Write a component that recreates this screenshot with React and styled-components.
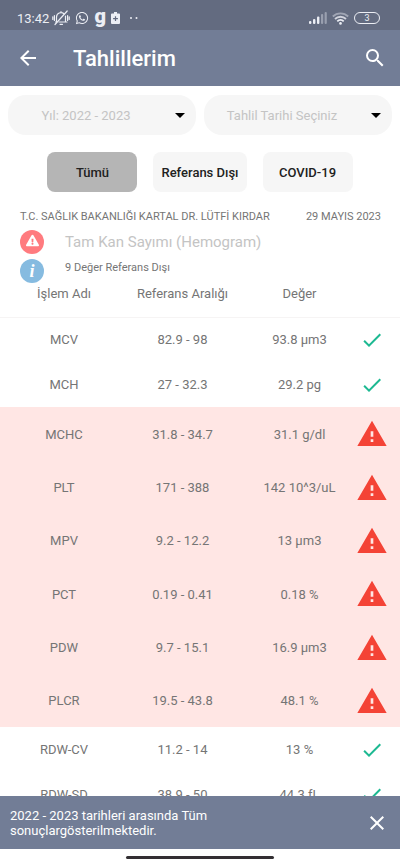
import React, { useState } from 'react'
import styled, { createGlobalStyle } from 'styled-components'
import { FaExclamationTriangle, FaWhatsapp } from 'react-icons/fa'
import {
  MdArrowBack,
  MdArrowDropDown,
  MdCheck,
  MdClose,
  MdSearch,
  MdWarning,
} from 'react-icons/md'

const GlobalStyle = createGlobalStyle`
  * {
    box-sizing: border-box;
  }

  body {
    margin: 0;
    background: #fff;
    color: #757575;
    font-family: Roboto, 'Noto Sans', sans-serif;
    font-size: 13px;
  }

  button,
  select {
    font-family: inherit;
  }

  svg {
    display: block;
    flex: none;
  }
`

const Screen = styled.div`
  display: flex;
  flex-direction: column;
  height: 100vh;
  overflow: hidden;
`

const StatusBar = styled.div`
  display: flex;
  flex: none;
  align-items: center;
  height: 30px;
  padding: 6px 20px 0 17px;
  background: #636b80;
  color: #eceef4;
`

const Clock = styled.span`
  font-size: 13px;
  margin-right: 3px;
`

const StatusIcons = styled.div`
  display: flex;
  align-items: center;
  gap: ${props => props.$gap}px;
`

const AppGlyph = styled.span`
  width: 12px;
  font-size: 20px;
  font-weight: 900;
  line-height: 16px;
  height: 20px;
`

const Spacer = styled.div`
  flex: 1;
`

const Battery = styled.span`
  width: 26px;
  height: 12px;
  border: 1px solid #eceef4;
  border-radius: 6px;
  font-size: 9px;
  line-height: 10px;
  text-align: center;
`

const Header = styled.header`
  display: flex;
  flex: none;
  align-items: center;
  height: 56px;
  padding: 0 13px 0 16px;
  background: #727d96;
  color: #fff;

  h1 {
    flex: 1;
    margin: 0 0 0 33px;
    font-size: 22px;
    font-weight: 500;
  }
`

const IconButton = styled.button`
  display: flex;
  padding: 0;
  border: 0;
  background: none;
  color: #fff;
  font-size: 24px;
`

const Content = styled.main`
  flex: 1;
  min-height: 0;
  overflow: hidden;
`

const Filters = styled.div`
  display: flex;
  gap: 8px;
  padding: 9px 8px 0;
`

const SelectBox = styled.label`
  position: relative;
  flex: 1;

  select {
    appearance: none;
    width: 100%;
    height: 40px;
    padding: 0 32px 0 0;
    border: 0;
    border-radius: 18px;
    background: #f6f6f6;
    color: #c4c4c4;
    font-size: 13px;
    text-align: center;
    text-align-last: center;
  }

  svg {
    position: absolute;
    top: 8px;
    right: 4px;
    color: #000;
    font-size: 24px;
    pointer-events: none;
  }
`

const Tabs = styled.div`
  display: flex;
  justify-content: center;
  gap: 16px;
  padding-top: 17px;
`

const Tab = styled.button`
  min-width: 90px;
  height: 40px;
  padding: 0 8px;
  border: 0;
  border-radius: 8px;
  background: ${props => (props.$active ? '#b5b5b5' : '#f6f6f6')};
  color: #212121;
  font-size: 13px;
  font-weight: 500;
`

const Report = styled.section`
  padding: 17px 19px 0 20px;
  font-size: 11px;
`

const ReportSource = styled.div`
  display: flex;
  justify-content: space-between;
  line-height: 16px;
  white-space: nowrap;
`

const ReportLine = styled.div`
  display: flex;
  align-items: center;
  gap: 21px;
  height: 29px;
  margin-top: ${props => (props.$first ? 2 : 0)}px;

  h2 {
    margin: 0;
    color: #c4c4c4;
    font-size: 15px;
    font-weight: 400;
  }

  p {
    margin: 0;
    padding-bottom: 6px;
    line-height: 14px;
  }
`

const Badge = styled.span`
  display: flex;
  flex: none;
  align-items: center;
  justify-content: center;
  width: 24px;
  height: 24px;
  border-radius: 50%;
  background: ${props => props.$color};
  color: #fff;
  font: italic bold 18px/24px 'Liberation Serif', serif;

  svg {
    font-size: 13px;
    margin-bottom: 2px;
  }
`

const Results = styled.table`
  width: 100%;
  border-collapse: collapse;
  table-layout: fixed;

  th,
  td {
    padding: 0;
    font-weight: 400;
    text-align: center;
  }

  th {
    height: 32px;
    padding-bottom: 14px;
    border-bottom: 1px solid #f6f4f4;
  }

  th:first-child,
  td:first-child {
    width: 31%;
    padding-left: 4px;
  }

  th:last-child,
  td:last-child {
    width: 42px;
    padding-right: 14px;
  }

  td svg {
    margin: 0 -4px;
  }
`

const ResultRow = styled.tr`
  height: ${props => (props.$out ? 53 : 45)}px;
  background: ${props => (props.$out ? '#ffe6e4' : '#fff')};

  &:nth-child(3n) {
    height: ${props => (props.$out ? 54 : 45)}px;
  }
`

const StatusIcon = styled.span`
  display: flex;
  justify-content: center;
  color: ${props => (props.$out ? '#f44336' : '#1db992')};
  font-size: ${props => (props.$out ? 32 : 24)}px;
`

const Notice = styled.div`
  display: flex;
  flex: none;
  align-items: center;
  justify-content: space-between;
  height: 53px;
  padding: 0 11px 0 10px;
  background: #727d96;
  color: #fff;
  line-height: 15px;

  p {
    margin: 0;
  }
`

const HomeBar = styled.div`
  display: flex;
  flex: none;
  align-items: center;
  justify-content: center;
  height: 17px;

  span {
    width: 148px;
    height: 3px;
    border-radius: 2px;
    background: #332f33;
  }
`

const BellOff = () => (
  <svg width="18" height="16" viewBox="0 0 18 16" fill="none" stroke="currentColor" strokeWidth="1.2" strokeLinecap="round">
    <path d="M4.5 11.5V7A4.5 4.5 0 0 1 12 3.8M13.5 6v5.5M7 12h8M3.5 12h1M8 14.3h2.5M9 1.5v1" />
    <path d="M15.2 1 3 14.5" />
    <path d="M2.4 5.5v5M.8 6.8v2.6M15.6 5.5v5M17.2 6.8v2.6" />
  </svg>
)

const BatteryPlus = () => (
  <svg width="9" height="12" viewBox="0 0 9 12">
    <path fill="currentColor" d="M3 0h3v1.5h2a1 1 0 0 1 1 1V11a1 1 0 0 1-1 1H1a1 1 0 0 1-1-1V2.5a1 1 0 0 1 1-1h2z" />
    <path stroke="#636b80" strokeWidth="1.2" d="M4.5 4.3v4.8M2.1 6.7h4.8" />
  </svg>
)

const Dots = () => (
  <svg width="8" height="4" viewBox="0 0 8 4" fill="currentColor">
    <circle cx="1" cy="2" r="1" />
    <circle cx="6.5" cy="2" r="1" />
  </svg>
)

const Signal = () => (
  <svg width="18" height="12" viewBox="0 0 18 12" fill="currentColor">
    <rect x="0" y="9" width="2.4" height="3" rx="1" />
    <rect x="4" y="7" width="2.4" height="5" rx="1" />
    <rect x="8" y="4.5" width="2.4" height="7.5" rx="1" />
    <rect x="12" y="2" width="2.2" height="10" rx="1" opacity="0.4" />
    <rect x="15.6" y="0" width="2.2" height="12" rx="1" opacity="0.4" />
  </svg>
)

const Wifi = () => (
  <svg width="17" height="13" viewBox="0 0 17 13" fill="none" stroke="currentColor" strokeWidth="1.8">
    <path d="M.8 4.5a11 11 0 0 1 15.4 0" opacity="0.45" />
    <path d="M3 7a7.8 7.8 0 0 1 11 0" opacity="0.8" />
    <path d="M5.3 9.3a4.6 4.6 0 0 1 6.4 0" />
    <circle cx="8.5" cy="11.4" r="1.3" fill="currentColor" stroke="none" />
  </svg>
)

const filters = ['Tümü', 'Referans Dışı', 'COVID-19']

const results = [
  { name: 'MCV', range: '82.9 - 98', value: '93.8 µm3' },
  { name: 'MCH', range: '27 - 32.3', value: '29.2 pg' },
  { name: 'MCHC', range: '31.8 - 34.7', value: '31.1 g/dl', out: true },
  { name: 'PLT', range: '171 - 388', value: '142 10^3/uL', out: true },
  { name: 'MPV', range: '9.2 - 12.2', value: '13 µm3', out: true },
  { name: 'PCT', range: '0.19 - 0.41', value: '0.18 %', out: true },
  { name: 'PDW', range: '9.7 - 15.1', value: '16.9 µm3', out: true },
  { name: 'PLCR', range: '19.5 - 43.8', value: '48.1 %', out: true },
  { name: 'RDW-CV', range: '11.2 - 14', value: '13 %' },
  { name: 'RDW-SD', range: '38.9 - 50', value: '44.3 fL' },
]

export default () => {
  const [active, setActive] = useState('Tümü')
  const [showNotice, setShowNotice] = useState(true)

  return (
    <Screen>
      <GlobalStyle />
      <StatusBar>
        <Clock>13:42</Clock>
        <StatusIcons $gap={5}>
          <BellOff />
          <FaWhatsapp size={14} />
          <AppGlyph>g</AppGlyph>
          <BatteryPlus />
          <Spacer />
          <Dots />
        </StatusIcons>
        <Spacer />
        <StatusIcons $gap={5}>
          <Signal />
          <Wifi />
          <Battery>3</Battery>
        </StatusIcons>
      </StatusBar>
      <Header>
        <IconButton aria-label="Geri">
          <MdArrowBack />
        </IconButton>
        <h1>Tahlillerim</h1>
        <IconButton aria-label="Ara">
          <MdSearch />
        </IconButton>
      </Header>
      <Content>
        <Filters>
          <SelectBox>
            <select aria-label="Yıl">
              <option>Yıl: 2022 - 2023</option>
            </select>
            <MdArrowDropDown />
          </SelectBox>
          <SelectBox>
            <select aria-label="Tahlil Tarihi">
              <option>Tahlil Tarihi Seçiniz</option>
            </select>
            <MdArrowDropDown />
          </SelectBox>
        </Filters>
        <Tabs>
          {filters.map(label => (
            <Tab
              key={label}
              $active={label === active}
              onClick={() => setActive(label)}
            >
              {label}
            </Tab>
          ))}
        </Tabs>
        <Report>
          <ReportSource>
            <span>T.C. SAĞLIK BAKANLIĞI KARTAL DR. LÜTFİ KIRDAR</span>
            <span>29 MAYIS 2023</span>
          </ReportSource>
          <ReportLine $first>
            <Badge $color="#ff7b7f">
              <FaExclamationTriangle />
            </Badge>
            <h2>Tam Kan Sayımı (Hemogram)</h2>
          </ReportLine>
          <ReportLine>
            <Badge $color="#86bbe0">i</Badge>
            <p>9 Değer Referans Dışı</p>
          </ReportLine>
        </Report>
        <Results>
          <thead>
            <tr>
              <th>İşlem Adı</th>
              <th>Referans Aralığı</th>
              <th>Değer</th>
              <th aria-label="Durum" />
            </tr>
          </thead>
          <tbody>
            {results.map(({ name, range, value, out }) => (
              <ResultRow key={name} $out={out}>
                <td>{name}</td>
                <td>{range}</td>
                <td>{value}</td>
                <td>
                  <StatusIcon $out={out}>
                    {out ? <MdWarning /> : <MdCheck />}
                  </StatusIcon>
                </td>
              </ResultRow>
            ))}
          </tbody>
        </Results>
      </Content>
      {showNotice && (
        <Notice>
          <p>
            2022 - 2023 tarihleri arasında Tüm
            <br />
            sonuçlargösterilmektedir.
          </p>
          <IconButton aria-label="Kapat" onClick={() => setShowNotice(false)}>
            <MdClose />
          </IconButton>
        </Notice>
      )}
      <HomeBar>
        <span />
      </HomeBar>
    </Screen>
  )
}
